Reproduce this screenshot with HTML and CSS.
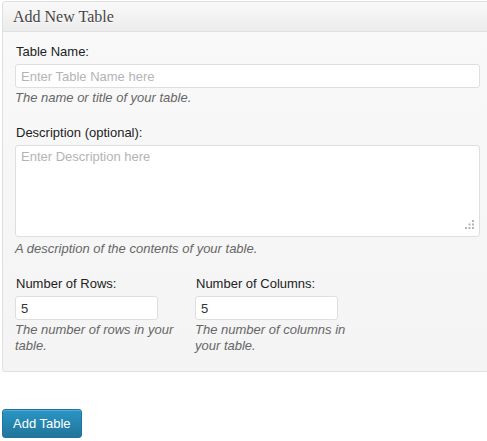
FILE: index.html
```html
<!DOCTYPE html>
<html lang="en">
<head>
    <meta charset="UTF-8">
    <title>Add New Table</title>
    <link rel="stylesheet" href="styles.css">
</head>
<body>
    <div class="wrap">
        <div class="postbox">
            <h3 class="hndle">Add New Table</h3>
            <div class="inside">
                <div class="field">
                    <label for="table-name">Table Name:</label>
                    <input type="text" id="table-name" class="large-text" placeholder="Enter Table Name here">
                    <p class="description">The name or title of your table.</p>
                </div>
                <div class="field">
                    <label for="table-description">Description (optional):</label>
                    <div class="textarea-box">
                        <textarea id="table-description" class="large-text" placeholder="Enter Description here"></textarea>
                        <svg class="grip" width="9" height="9" viewBox="0 0 9 9">
                            <rect x="7" y="0" width="2" height="2" fill="#b4b4b4"/>
                            <rect x="3.5" y="3.5" width="2" height="2" fill="#b4b4b4"/>
                            <rect x="7" y="3.5" width="2" height="2" fill="#b4b4b4"/>
                            <rect x="0" y="7" width="2" height="2" fill="#b4b4b4"/>
                            <rect x="3.5" y="7" width="2" height="2" fill="#b4b4b4"/>
                            <rect x="7" y="7" width="2" height="2" fill="#b4b4b4"/>
                        </svg>
                    </div>
                    <p class="description">A description of the contents of your table.</p>
                </div>
                <div class="field field-row">
                    <div class="col">
                        <label for="table-rows">Number of Rows:</label>
                        <input type="text" id="table-rows" class="small-text" value="5">
                        <p class="description">The number of rows in your table.</p>
                    </div>
                    <div class="col">
                        <label for="table-columns">Number of Columns:</label>
                        <input type="text" id="table-columns" class="small-text" value="5">
                        <p class="description">The number of columns in your table.</p>
                    </div>
                </div>
            </div>
        </div>
        <button class="button-primary">Add Table</button>
    </div>
</body>
</html>
```

FILE: styles.css
```css
html, body {
    margin: 0;
    overflow: hidden;
    background: #ffffff;
    font-family: 'Liberation Sans', Arial, sans-serif;
    font-size: 13px;
    color: #333333;
}
.wrap {
    padding: 1px 0 0 2px;
}
.postbox {
    width: 520px;
    border: 1px solid #dfdfdf;
    border-radius: 3px;
    background: linear-gradient(to bottom, #f9f9f9, #f4f4f4);
    box-shadow: inset 0 1px 0 #ffffff;
}
.hndle {
    margin: 0;
    height: 29px;
    line-height: 29px;
    padding: 0 10px;
    font-family: 'Liberation Serif', Georgia, serif;
    font-weight: normal;
    font-size: 16px;
    color: #464646;
    background: linear-gradient(to bottom, #f9f9f9, #ececec);
    border-bottom: 1px solid #dfdfdf;
    border-radius: 3px 3px 0 0;
    text-shadow: 0 1px 0 #ffffff;
}
.inside {
    padding: 12px 12px 17px;
    width: 465px;
}
.field + .field {
    margin-top: 19px;
}
label {
    display: block;
    line-height: 16px;
    padding-left: 1px;
    margin-bottom: 4px;
    color: #222222;
}
input[type="text"], textarea {
    display: block;
    box-sizing: border-box;
    margin: 0;
    border: 1px solid #dfdfdf;
    border-radius: 3px;
    background: #ffffff;
    font-family: 'Liberation Sans', Arial, sans-serif;
    font-size: 13px;
    color: #333333;
    outline: none;
}
input[type="text"] {
    height: 24px;
    padding: 2px 5px;
}
.textarea-box {
    position: relative;
}
textarea {
    height: 92px;
    padding: 3px 5px;
    resize: none;
}
.grip {
    position: absolute;
    right: 6px;
    bottom: 8px;
}
::placeholder {
    color: #b4b4b4;
}
.large-text {
    width: 465px;
}
.small-text {
    width: 143px;
}
.description {
    margin: 2px 0 0;
    line-height: 16px;
    font-style: italic;
    color: #666666;
}
.textarea-box + .description {
    margin-top: 4px;
}
.field-row {
    display: flex;
}
.col {
    width: 180px;
}
.col .description {
    width: 162px;
}
.button-primary {
    margin-top: 37px;
    height: 29px;
    padding: 0 10px;
    border: 1px solid #21759b;
    border-radius: 3px;
    background: linear-gradient(to bottom, #2a95c5, #21759b);
    box-shadow: inset 0 1px 0 rgba(120, 200, 230, 0.5);
    color: #ffffff;
    font-family: 'Liberation Sans', Arial, sans-serif;
    font-size: 13px;
    cursor: pointer;
}
```
